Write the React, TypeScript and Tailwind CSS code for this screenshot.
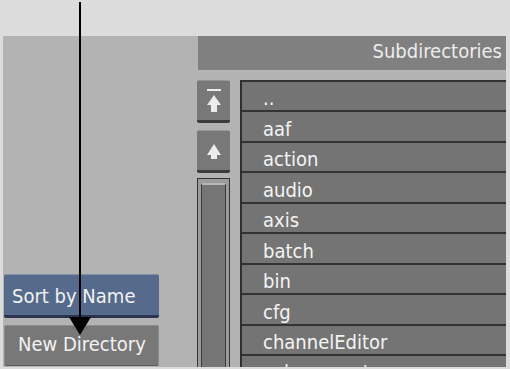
import React from "react";

const font = "font-['DejaVu_Sans_Condensed','DejaVu_Sans',sans-serif] font-stretch-condensed";

const dirs = ["..", "aaf", "action", "audio", "axis", "batch", "bin", "cfg", "channelEditor", "colorcorrect"];

function ScrollButton({ top }: { top?: boolean }) {
  return (
    <div className="flex h-[43px] w-[33px] items-center justify-center rounded-[2px] border-t border-[#959595] border-b-[3px] border-b-[#3c3c3c] bg-[#787878]">
      <svg width="14" height="24" viewBox="0 0 14 24" className={top ? "mt-[1px]" : "mt-[3px]"}>
        {top && <rect x="0" y="0" width="14" height="2" fill="#ececec" />}
        <polygon points={top ? "7,6 14,16 0,16" : "7,4 14,15 0,15"} fill="#ececec" />
        <rect x="4" y={top ? 15 : 14} width="6" height={top ? 8 : 5} fill="#ececec" />
      </svg>
    </div>
  );
}

export default function App() {
  return (
    <div className={`relative w-[510px] h-[369px] overflow-hidden bg-[#dcdcdc] pt-[36px] pl-[3px] pr-[4px] ${font}`}>
      <div className="flex h-[331px] bg-[#b3b3b3]">
        {/* left buttons */}
        <div className="flex w-[194px] flex-col justify-end gap-[7px] pb-[1px] pl-[1px]">
          <div className="h-[44px] w-[155px] rounded-[2px] border-t border-[#7d8fab] border-b-[3px] border-b-[#2a3450] bg-[#566b8b] pl-[8px] pt-[11px] text-[20px] leading-[20px] text-[#f2f2f2]">
            Sort by Name
          </div>
          <div className="h-[41px] w-[155px] rounded-[2px] border border-[#8c8c8c] border-b-[#5c5c5c] bg-[#787878] pl-[13px] pt-[8px] text-[20px] leading-[20px] text-[#f2f2f2]">
            New Directory
          </div>
        </div>

        {/* right side */}
        <div className="flex flex-1 flex-col">
          <div className="ml-[1px] h-[34px] bg-[#808080] pr-[4px] pt-[5px] text-right text-[20px] leading-[20px] text-[#ececec]">
            Subdirectories
          </div>
          <div className="flex flex-1 gap-[10px] overflow-hidden pt-[10px]">
            <div className="flex w-[33px] flex-col">
              <ScrollButton top />
              <div className="mt-[7px]">
                <ScrollButton />
              </div>
              <div className="mt-[5px] flex flex-1 border border-[#333] border-b-0 bg-[#9c9c9c] px-[3px] pt-[4px]">
                <div className="flex-1 border border-[#3a3a3a] border-b-0 border-t-2 border-t-[#b8b8b8] bg-[#767676]" />
              </div>
            </div>
            <div className="flex-1 overflow-hidden border-l-2 border-[#2f2f2f] bg-[#747474]">
              {dirs.map((d) => (
                <div
                  key={d}
                  className="flex h-[30.44px] items-end border-t-2 border-[#333333] pb-[2px] pl-[21px] text-[20px] leading-[20px] text-[#f4f4f4]"
                >
                  {d}
                </div>
              ))}
            </div>
          </div>
        </div>
      </div>

      {/* annotation arrow */}
      <svg className="absolute left-0 top-0" width="510" height="369" viewBox="0 0 510 369">
        <rect x="79" y="2" width="2" height="318" fill="#000" />
        <polygon points="69,317 91,317 80,335" fill="#000" />
      </svg>
    </div>
  );
}
